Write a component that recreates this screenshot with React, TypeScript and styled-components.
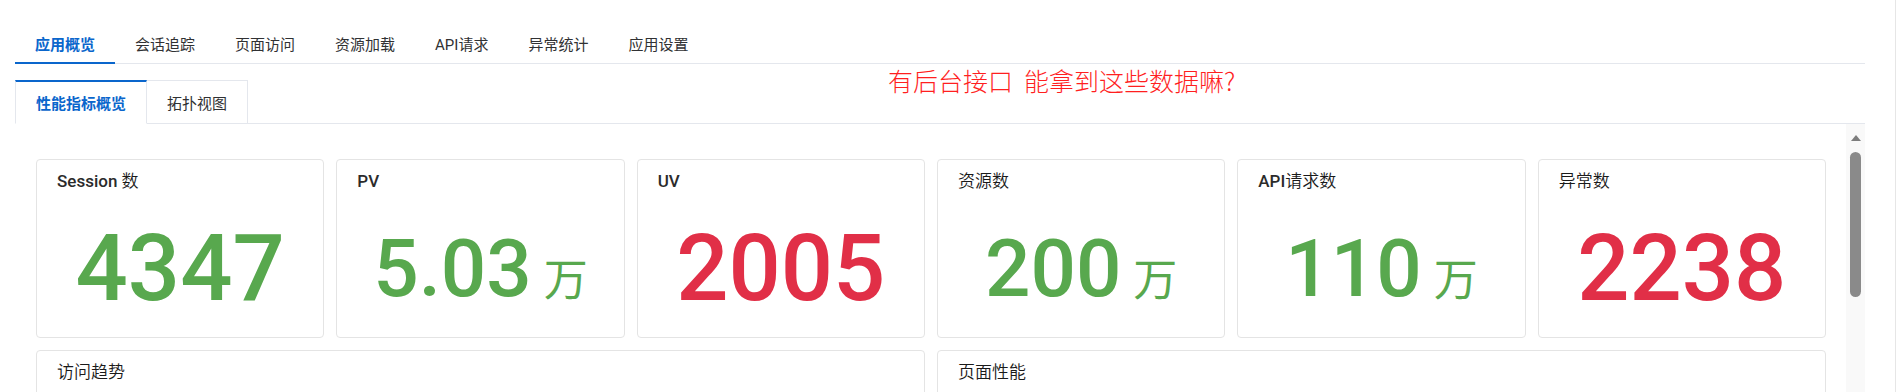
import React from "react";
import styled, { createGlobalStyle, css } from "styled-components";

const BLUE = "#0a66cc";
const GREEN = "#58a84e";
const RED = "#e12f47";

const GlobalStyle = createGlobalStyle`
  html, body { margin: 0; padding: 0; background: #fff; }
  body { font-family: Roboto, "Noto Sans CJK SC", sans-serif; color: #303133; }
  *, *::before, *::after { box-sizing: border-box; }
`;

const Root = styled.div`
  display: flex;
  height: 392px;
  overflow: hidden;
  padding-left: 15px;
`;

const Main = styled.div`
  position: relative;
  width: 1850px;
  padding-top: 23px;
  display: flex;
  flex-direction: column;
`;

const Edge = styled.div`
  margin-left: auto;
  width: 5px;
  height: 100%;
  border-left: 1px solid #e6e6e6;
`;

const TabNav = styled.div`
  display: flex;
  height: 41px;
  border-bottom: 1px solid #e4e7ed;
`;

const TabItem = styled.div<{ $active?: boolean }>`
  position: relative;
  height: 41px;
  padding: 0 20px;
  display: flex;
  align-items: center;
  font-family: Roboto, "Noto Sans CJK SC", sans-serif;
  font-size: 15px;
  color: #303133;
  white-space: nowrap;
  ${(p) =>
    p.$active &&
    css`
      color: ${BLUE};
      font-weight: 700;
      &::after {
        content: "";
        position: absolute;
        left: 0;
        right: 0;
        bottom: 0;
        height: 2px;
        background: ${BLUE};
      }
    `}
`;

const SubTabBar = styled.div`
  margin-top: 16px;
  display: flex;
  height: 44px;
  border-bottom: 1px solid #e4e7ed;
`;

const SubTab = styled.div<{ $active?: boolean; $first?: boolean }>`
  height: 44px;
  margin-bottom: -1px;
  padding: 0 20px;
  display: flex;
  align-items: center;
  background: #fff;
  font-family: Roboto, "Noto Sans CJK SC", sans-serif;
  font-size: 15px;
  white-space: nowrap;
  border-right: 1px solid #e4e7ed;
  border-left: ${(p) => (p.$first ? "1px solid #e4e7ed" : "none")};
  ${(p) =>
    p.$active
      ? css`
          color: ${BLUE};
          font-weight: 700;
          border-top: 2px solid ${BLUE};
          border-bottom: 1px solid #fff;
        `
      : css`
          color: #303133;
          border-top: 1px solid #e4e7ed;
          border-bottom: 1px solid #e4e7ed;
        `}
`;

const Annotation = styled.div`
  position: absolute;
  left: 873px;
  top: 68px;
  font-family: "Noto Sans CJK SC", sans-serif;
  font-size: 25px;
  line-height: 1;
  font-weight: 300;
  color: #ff1f1f;
  white-space: pre;
`;

const Body = styled.div`
  flex: 1;
  min-height: 0;
  display: flex;
`;

const Content = styled.div`
  flex: 1;
  min-width: 0;
  padding: 35px 20px 0 21px;
  overflow: hidden;
`;

const StatGrid = styled.div`
  display: grid;
  grid-template-columns: repeat(6, 1fr);
  gap: 12px;
`;

const ChartGrid = styled.div`
  margin-top: 12px;
  display: grid;
  grid-template-columns: repeat(2, 1fr);
  gap: 12px;
`;

const Card = styled.div<{ $height: number }>`
  height: ${(p) => p.$height}px;
  border: 1px solid #e4e4e4;
  border-radius: 4px;
  background: #fff;
  padding: 9px 20px 0;
  display: flex;
  flex-direction: column;
`;

const CardTitle = styled.div`
  font-size: 17px;
  line-height: 24px;
  font-weight: 500;
  color: #2b2b2b;
  white-space: nowrap;
`;

const CjkRun = styled.span`
  font-weight: 350;
  color: #1a1a1a;
`;

const ValueRow = styled.div<{ $size: number; $tone: "good" | "bad" }>`
  margin-top: 29px;
  text-align: center;
  font-size: ${(p) => p.$size}px;
  line-height: 94px;
  font-weight: 500;
  white-space: nowrap;
  color: ${(p) => (p.$tone === "good" ? GREEN : RED)};
`;

const Unit = styled.span`
  margin-left: 12px;
  font-size: 44px;
  font-weight: 400;
  font-family: "Noto Sans CJK SC", sans-serif;
`;

const ScrollTrack = styled.div`
  width: 19px;
  background: #f9f9f9;
  display: flex;
  flex-direction: column;
  align-items: center;
  padding-top: 11px;
`;

const ScrollArrow = styled.div`
  width: 0;
  height: 0;
  border-left: 5px solid transparent;
  border-right: 5px solid transparent;
  border-bottom: 6px solid #7d7d7d;
`;

const ScrollThumb = styled.div`
  margin-top: 11px;
  width: 11px;
  height: 145px;
  border-radius: 6px;
  background: #8a8a8a;
`;

type Stat = { title: string; value: string; unit?: string; tone: "good" | "bad" };

const stats: Stat[] = [
  { title: "Session 数", value: "4347", tone: "good" },
  { title: "PV", value: "5.03", unit: "万", tone: "good" },
  { title: "UV", value: "2005", tone: "bad" },
  { title: "资源数", value: "200", unit: "万", tone: "good" },
  { title: "API请求数", value: "110", unit: "万", tone: "good" },
  { title: "异常数", value: "2238", tone: "bad" },
];

const tabs = ["应用概览", "会话追踪", "页面访问", "资源加载", "API请求", "异常统计", "应用设置"];

function Title({ text }: { text: string }) {
  const parts = text.split(/([\u4e00-\u9fff]+)/).filter(Boolean);
  return (
    <CardTitle>
      {parts.map((p, i) =>
        /[\u4e00-\u9fff]/.test(p) ? <CjkRun key={i}>{p}</CjkRun> : <React.Fragment key={i}>{p}</React.Fragment>
      )}
    </CardTitle>
  );
}

export default function App() {
  return (
    <>
      <GlobalStyle />
      <Root>
        <Main>
          <TabNav>
            {tabs.map((t, i) => (
              <TabItem key={t} $active={i === 0}>
                {t}
              </TabItem>
            ))}
          </TabNav>
          <SubTabBar>
            <SubTab $active $first>
              性能指标概览
            </SubTab>
            <SubTab>拓扑视图</SubTab>
          </SubTabBar>
          <Annotation>{"有后台接口  能拿到这些数据嘛?"}</Annotation>
          <Body>
            <Content>
              <StatGrid>
                {stats.map((s) => (
                  <Card key={s.title} $height={179}>
                    <Title text={s.title} />
                    <ValueRow $size={s.unit ? 80 : 92} $tone={s.tone}>
                      {s.value}
                      {s.unit && <Unit>{s.unit}</Unit>}
                    </ValueRow>
                  </Card>
                ))}
              </StatGrid>
              <ChartGrid>
                <Card $height={300}>
                  <Title text="访问趋势" />
                </Card>
                <Card $height={300}>
                  <Title text="页面性能" />
                </Card>
              </ChartGrid>
            </Content>
            <ScrollTrack>
              <ScrollArrow />
              <ScrollThumb />
            </ScrollTrack>
          </Body>
        </Main>
        <Edge />
      </Root>
    </>
  );
}
